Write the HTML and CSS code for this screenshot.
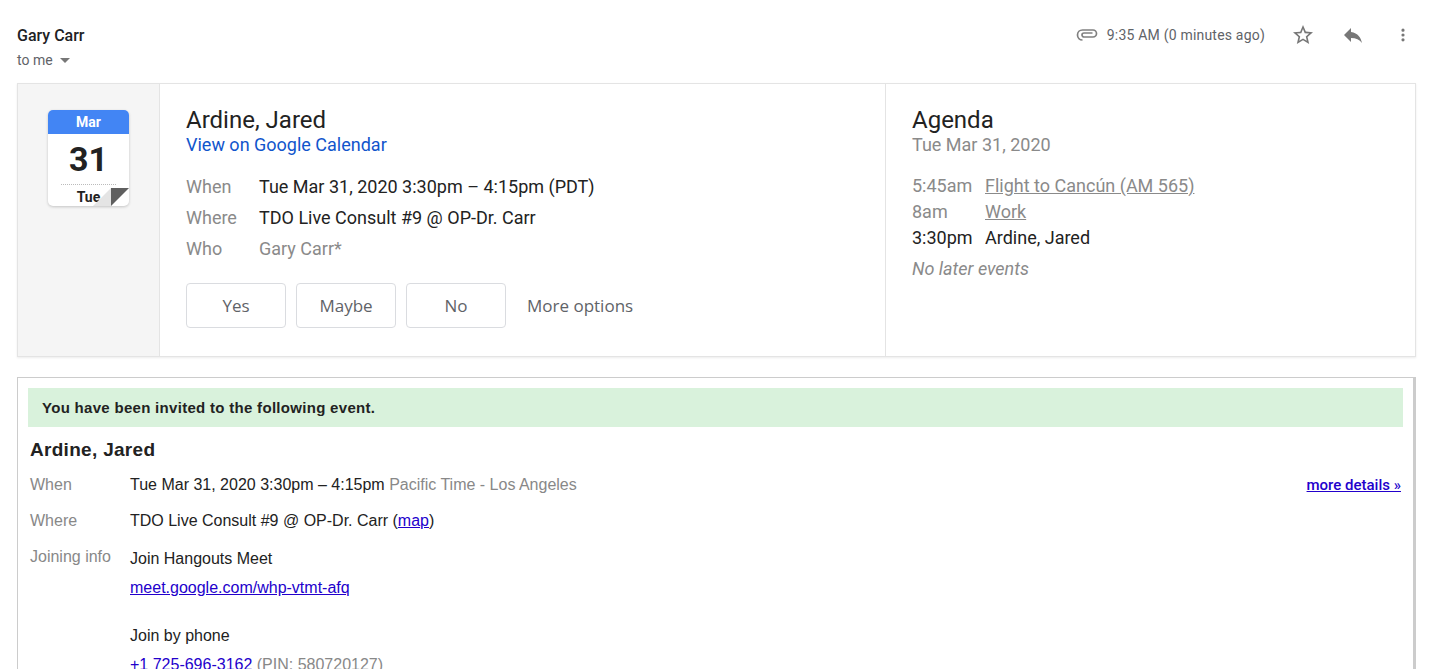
FILE: index.html
```html
<!DOCTYPE html>
<html lang="en">
<head>
<meta charset="utf-8">
<title>Invitation</title>
<link rel="stylesheet" href="styles.css">
</head>
<body>
<div class="page">
  <header class="head">
    <div class="sender">
      <div class="name">Gary Carr</div>
      <div class="tome">to me <span class="caret"></span></div>
    </div>
    <div class="meta">
      <svg class="clip" width="24" height="24" viewBox="0 0 24 24"><path d="M7.5 17.5C4.7 17.5 2.5 15.3 2.5 12.5S4.7 7.5 7.5 7.5H18c2 0 3.5 1.6 3.5 3.5S20 14.5 18 14.5H9c-1.1 0-2-.9-2-2s.9-2 2-2h8.5" fill="none" stroke="#808080" stroke-width="1.7" transform="translate(0 -.5)"/></svg>
      <span class="time">9:35 AM (0 minutes ago)</span>
      <svg class="star" width="24" height="24" viewBox="0 0 24 24"><path fill="#777" d="M22 9.24l-7.19-.62L12 2 9.19 8.63 2 9.24l5.46 4.73L5.82 21 12 17.27 18.18 21l-1.63-7.03L22 9.24zM12 15.4l-3.76 2.27 1-4.28-3.32-2.88 4.38-.38L12 6.1l1.71 4.04 4.38.38-3.32 2.88 1 4.28L12 15.4z"/></svg>
      <svg class="reply" width="24" height="24" viewBox="0 0 24 24"><path fill="#777" d="M10 9V5l-7 7 7 7v-4.1c5 0 8.5 1.6 11 5.1-1-5-4-10-11-11z"/></svg>
      <svg class="more" width="24" height="24" viewBox="0 0 24 24"><path fill="#777" d="M12 8a2 2 0 1 0 0-4 2 2 0 0 0 0 4zm0 2a2 2 0 1 0 0 4 2 2 0 0 0 0-4zm0 6a2 2 0 1 0 0 4 2 2 0 0 0 0-4z" transform="translate(2.4 2.4) scale(.8)"/></svg>
    </div>
  </header>

  <section class="card">
    <div class="cal-cell">
      <div class="cal">
        <div class="cal-month">Mar</div>
        <div class="cal-day">31</div>
        <div class="cal-dow">Tue</div>
        <span class="fold"></span>
        <span class="fold-dark"></span>
      </div>
    </div>
    <div class="event">
      <div class="title">Ardine, Jared</div>
      <a class="gcal" href="#">View on Google Calendar</a>
      <div class="rows">
        <div class="row"><span class="lbl">When</span><span>Tue Mar 31, 2020 3:30pm – 4:15pm (PDT)</span></div>
        <div class="row"><span class="lbl">Where</span><span>TDO Live Consult #9 @ OP-Dr. Carr</span></div>
        <div class="row"><span class="lbl">Who</span><span class="grey">Gary Carr*</span></div>
      </div>
      <div class="actions">
        <button class="btn">Yes</button>
        <button class="btn">Maybe</button>
        <button class="btn">No</button>
        <span class="opts">More options</span>
      </div>
    </div>
    <div class="agenda">
      <div class="title">Agenda</div>
      <div class="agenda-date">Tue Mar 31, 2020</div>
      <div class="ag-rows">
        <div class="ag-row past"><span class="ag-t">5:45am</span><a href="#">Flight to Cancún (AM 565)</a></div>
        <div class="ag-row past"><span class="ag-t">8am</span><a href="#">Work</a></div>
        <div class="ag-row"><span class="ag-t">3:30pm</span><span>Ardine, Jared</span></div>
      </div>
      <div class="later">No later events</div>
    </div>
  </section>

  <section class="invite">
    <div class="banner">You have been invited to the following event.</div>
    <h2 class="inv-title">Ardine, Jared</h2>
    <div class="inv-row">
      <span class="inv-lbl">When</span>
      <span class="inv-val">Tue Mar 31, 2020 3:30pm – 4:15pm <span class="tz">Pacific Time - Los Angeles</span></span>
      <a class="details" href="#">more details »</a>
    </div>
    <div class="inv-row">
      <span class="inv-lbl">Where</span>
      <span class="inv-val">TDO Live Consult #9 @ OP-Dr. Carr (<a href="#">map</a>)</span>
    </div>
    <div class="inv-row">
      <span class="inv-lbl">Joining info</span>
      <div class="inv-val">
        <div class="join">Join Hangouts Meet</div>
        <div class="join"><a href="#">meet.google.com/whp-vtmt-afq</a></div>
        <div class="join phone-h">Join by phone</div>
        <div class="join"><a class="plain" href="#">+1 725-696-3162</a> <span class="tz">(PIN: 580720127)</span></div>
      </div>
    </div>
  </section>
</div>
</body>
</html>
```

FILE: styles.css
```css
* { box-sizing: border-box; }
html, body { margin: 0; height: 669px; overflow: hidden; background: #fff; }
body { font-family: Roboto, "Liberation Sans", sans-serif; color: #222; }
.page { padding: 0 21px 0 17px; }

.head { display: flex; justify-content: space-between; height: 83px; padding-top: 24px; }
.name { font-size: 16px; font-weight: 500; line-height: 24px; color: #202124; }
.tome { font-size: 14px; line-height: 24px; color: #5f6368; display: flex; align-items: center; gap: 7px; }
.caret { width: 0; height: 0; border: 5px solid transparent; border-top-color: #777; border-bottom: 0; margin-top: 1px; }
.meta { display: flex; align-items: center; height: 22px; color: #5f6368; font-size: 14px; margin-right: 1px; }
.clip { margin-right: 8px; }
.time { letter-spacing: .2px; margin-right: 26px; }
.reply { margin-left: 26px; }
.more { margin-left: 26px; }

.card { display: flex; height: 274px; border: 1px solid #e4e4e4; box-shadow: 0 1px 2px rgba(0,0,0,.08); }
.cal-cell { width: 142px; flex: none; background: #f5f5f5; border-right: 1px solid #e4e4e4; padding: 26px 0 0 30px; }
.cal { position: relative; width: 81px; height: 96px; background: #fff; border-radius: 5px; box-shadow: 0 1px 3px rgba(0,0,0,.2); text-align: center; overflow: hidden; }
.cal-month { background: #4285f4; color: #fff; height: 24px; font-size: 14px; font-weight: 700; line-height: 24px; }
.cal-day { font-size: 34px; font-weight: 700; line-height: 38px; margin: 6px 13px 0; height: 45px; border-bottom: 1px dotted #bbb; color: #222; }
.cal-dow { font-size: 14px; font-weight: 700; line-height: 24px; color: #222; }
.fold { position: absolute; right: 18px; bottom: 0; width: 0; height: 0; border-style: solid; border-width: 0 0 18px 18px; border-color: transparent transparent #e4e4e4 transparent; }
.fold-dark { position: absolute; right: 0; bottom: 0; width: 0; height: 0; border-style: solid; border-width: 18px 18px 0 0; border-color: #5f5f5f transparent transparent transparent; }

.event { width: 726px; flex: none; border-right: 1px solid #e4e4e4; padding: 21px 0 0 26px; }
.agenda { flex: 1; padding: 21px 0 0 26px; }
.title { font-size: 24px; line-height: 30px; color: #222; }
.gcal { display: block; font-size: 18px; line-height: 20px; color: #1155cc; text-decoration: none; }
.rows { margin-top: 16px; }
.row { display: flex; font-size: 18px; line-height: 31px; color: #222; }
.lbl { width: 73px; color: #8a8a8a; }
.grey { color: #8a8a8a; }
.actions { display: flex; align-items: center; gap: 10px; margin-top: 19px; }
.btn { width: 100px; height: 45px; background: #fff; border: 1px solid #dadce0; border-radius: 4px; font-family: "Open Sans", Roboto, sans-serif; font-size: 17px; font-weight: 500; color: #5f6368; }
.opts { margin-left: 11px; font-family: "Open Sans", Roboto, sans-serif; font-size: 17px; font-weight: 500; color: #5f6368; }

.agenda-date { font-size: 18px; line-height: 20px; color: #8a8a8a; }
.ag-rows { margin-top: 18px; }
.ag-row { display: flex; font-size: 18px; line-height: 26px; color: #222; }
.ag-row.past { color: #8a8a8a; }
.ag-row a { color: #8a8a8a; }
.ag-t { width: 73px; }
.later { font-size: 18px; line-height: 26px; font-style: italic; color: #8a8a8a; margin-top: 5px; }

.invite { margin-top: 20px; border: 1px solid #ccc; border-right-width: 3px; border-bottom: 0; padding: 10px 10px 0 10px; height: 300px; font-size: 16px; }
.banner { height: 39px; background: #d9f2dc; padding-left: 14px; font-family: "Liberation Sans", Arial, sans-serif; font-weight: 700; font-size: 15px; letter-spacing: .3px; line-height: 39px; color: #222; }
.inv-title { margin: 11px 0 0 2px; font-family: "Liberation Sans", Arial, sans-serif; font-size: 19px; line-height: 24px; font-weight: 700; letter-spacing: .3px; color: #222; }
.inv-row { display: flex; margin: 10px 0 0 2px; font-family: "Liberation Sans", Arial, sans-serif; line-height: 26px; color: #222; }
.inv-lbl { width: 100px; flex: none; color: #888; }
.inv-val { flex: 1; }
.inv-val a { color: #2200cc; }
.tz { color: #888; }
.details { font-family: Roboto, sans-serif; font-weight: 500; font-size: 15px; color: #2200cc; margin-right: 2px; }
.join { line-height: 29px; }
.phone-h { margin-top: 19px; }
.join a.plain { text-decoration: none; }
```
